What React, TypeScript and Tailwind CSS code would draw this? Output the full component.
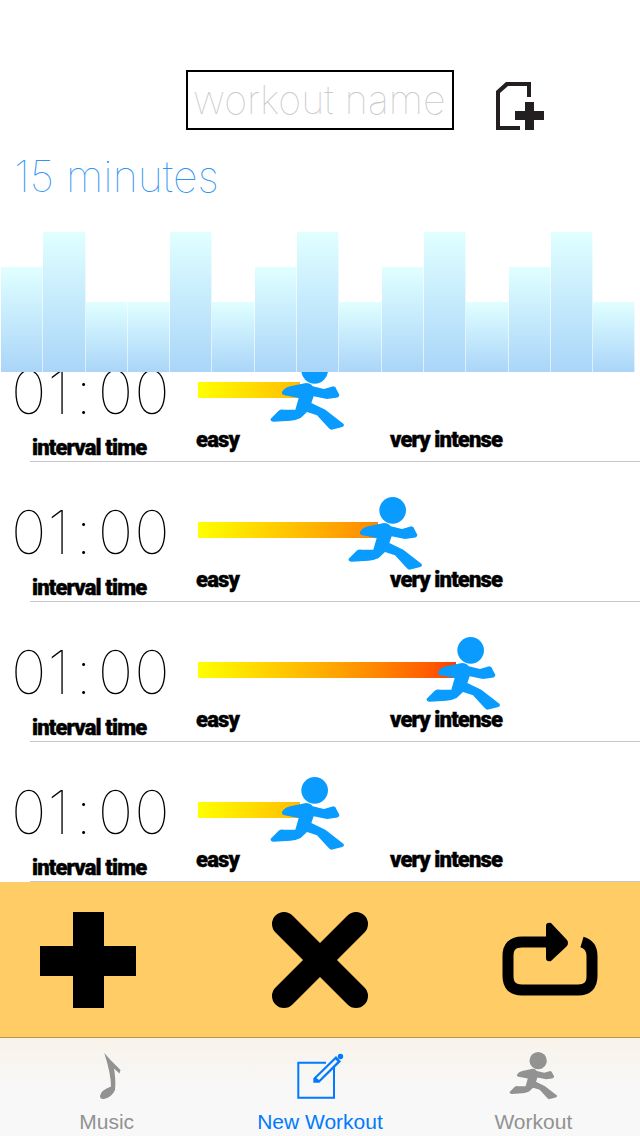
const BARS = [105, 140, 70, 70, 140, 70, 105, 140, 70, 105, 140, 70, 105, 140, 70];

const ROWS = [
  { id: 1, left: 72 },
  { id: 2, left: 150 },
  { id: 3, left: 228 },
  { id: 4, left: 72 },
];

function Runner({ className }: { className: string }) {
  return (
    <svg viewBox="24 47 225 222" className={className} fill="currentColor">
      <circle cx="158" cy="87" r="40" />
      <path d="M60 152 Q68 138 85 135 L132 125 Q145 125 152 135 L186 143 L214 135 Q222 136 224 145 L232 160 Q232 168 222 169 L195 173 L155 165 L148 185 L190 205 L245 248 Q248 256 238 258 L208 265 Q202 264 198 258 L165 222 L135 212 L116 230 Q100 238 85 238 L35 241 Q24 240 26 232 L50 208 Q55 204 65 205 L100 205 L110 170 L68 162 Q58 160 60 152 Z" />
    </svg>
  );
}

function Row({ left }: { left: number }) {
  return (
    <div className="relative flex h-[140px] shrink-0">
      <div className="w-[196px] shrink-0 pl-[11px] pt-[35px]">
        <div className="font-['Inter',sans-serif] text-[60px] font-thin leading-[70px] tracking-[1px] text-black whitespace-nowrap">
          01<span className="mx-[5px]">:</span>00
        </div>
        <div className="mt-[9px] ml-[21px] font-['Roboto',sans-serif] text-[22px] font-black leading-[24px] tracking-[-0.85px] text-black whitespace-nowrap [-webkit-text-stroke:0.4px_black]">interval time</div>
      </div>
      <div className="pt-[60px]">
        <div className="relative ml-[2px] h-[16px]">
          <div className="h-[16px] overflow-hidden" style={{ width: left + 30 }}>
            <div className="h-[16px] w-[285px] bg-gradient-to-r from-[#ffff00] to-[#ff0000]" />
          </div>
          <div className="absolute top-[-25px] text-[#0a9bff]" style={{ left }}>
            <Runner className="h-[74px] w-[75px]" />
          </div>
        </div>
        <div className="mt-[30px] flex font-['Roboto',sans-serif] text-[22px] font-black leading-[24px] tracking-[-0.85px] text-black [-webkit-text-stroke:0.4px_black]">
          <span className="w-[194px]">easy</span>
          <span className="whitespace-nowrap">very intense</span>
        </div>
      </div>
      <div className="absolute bottom-0 left-[30px] right-0 h-px bg-[#c8c7cc]" />
    </div>
  );
}

export default function App() {
  return (
    <div className="flex h-[1136px] w-[640px] flex-col overflow-hidden bg-white">
      <div className="flex h-[150px] shrink-0 items-start pl-[186px] pt-[70px]">
        <input
          placeholder="workout name"
          className="h-[60px] w-[268px] border-2 border-black px-[5px] font-['Inter',sans-serif] text-[39.5px] font-thin outline-none placeholder:text-[#c9c9ce]"
        />
        <svg viewBox="0 0 48 48" className="ml-[42px] mt-[12px] h-[48px] w-[48px]" fill="#231f20">
          <path d="M10 0 H35 V15 H31 V4 H12 L4 11 V44 H24 V48 H0 V9 Z" />
          <path d="M29 20 H38 V29 H48 V38 H38 V48 H29 V38 H19 V29 H29 Z" />
        </svg>
      </div>

      <div className="h-[82px] shrink-0 pl-[14px] pt-px font-['Inter',sans-serif] text-[43px] font-thin leading-[50px] text-[#2f95f5]">
        15 minutes
      </div>

      <div className="flex h-[140px] shrink-0 items-end pl-px">
        {BARS.map((h, i) => (
          <div
            key={i}
            className="w-[42.3px] border-r border-r-white/60 bg-gradient-to-b from-[#e0ffff] to-[#aad5f8]"
            style={{ height: h }}
          />
        ))}
      </div>

      <div className="min-h-0 flex-1 overflow-hidden">
        <div className="-mt-[50px]">
          {ROWS.map((r) => (
            <Row key={r.id} left={r.left} />
          ))}
        </div>
      </div>

      <div className="flex h-[156px] shrink-0 items-center justify-between border-b border-b-[#b9974a] bg-[#ffcc66] px-[40px] pt-px">
        <svg viewBox="0 0 96 96" className="h-[96px] w-[96px]" fill="#000">
          <path d="M33 0 H64 V34 H96 V64 H64 V96 H33 V64 H0 V34 H33 Z" />
        </svg>
        <svg viewBox="0 0 96 96" className="h-[96px] w-[96px]" fill="none" stroke="#000" strokeWidth="24" strokeLinecap="round">
          <path d="M12 12 L84 84 M84 12 L12 84" />
        </svg>
        <svg viewBox="0 0 96 96" className="h-[96px] w-[96px] -translate-x-[2px]" fill="none">
          <path d="M46 30 H20 Q6 30 6 44 V64 Q6 78 20 78 H76 Q90 78 90 64 V44 Q90 33 80 30" stroke="#000" strokeWidth="11" />
          <path d="M44 14 Q44 10 49 11 L65 28 Q67 31 65 34 L49 49 Q44 50 44 46 Z" fill="#000" />
        </svg>
      </div>

      <div className="grid h-[98px] shrink-0 grid-cols-3 bg-gradient-to-b from-[#f8f3ea] to-[#f8f8f8] to-50% font-['Liberation_Sans',sans-serif] text-[21px] leading-[24px]">
        <div className="flex flex-col items-center pt-[14px] text-[#929292]">
          <svg viewBox="0 0 48 48" className="h-[48px] w-[48px]" fill="#929292">
            <path d="M21.3 1 L27.5 8 L37.5 18 L36.5 21.5 L31 16.5 Q33 28 32 38 Q29 45 21 47 Q17 47.5 17 44 Q18 38 28 34.5 Q28 22 21.3 1 Z" />
          </svg>
          <span className="mt-[10px]">Music</span>
        </div>
        <div className="flex flex-col items-center pt-[14px] text-[#007aff]">
          <svg viewBox="0 0 48 48" className="h-[48px] w-[48px]" fill="none">
            <path d="M30 10.7 H2.3 V45.7 H38 V15" stroke="#007aff" strokeWidth="2" />
            <path d="M17.3 26.3 L40 4 L45 9.5 L23.3 30.7 H17.3 Z" fill="#007aff" />
            <path d="M20.5 26 L39.5 7.5 L41.5 9.5 L23 28 Z" fill="#f8f4ee" />
            <circle cx="44.5" cy="4.5" r="2.7" fill="#007aff" />
          </svg>
          <span className="mt-[10px]">New Workout</span>
        </div>
        <div className="flex flex-col items-center pt-[14px] text-[#929292]">
          <Runner className="h-[48px] w-[49px]" />
          <span className="mt-[10px]">Workout</span>
        </div>
      </div>
    </div>
  );
}
